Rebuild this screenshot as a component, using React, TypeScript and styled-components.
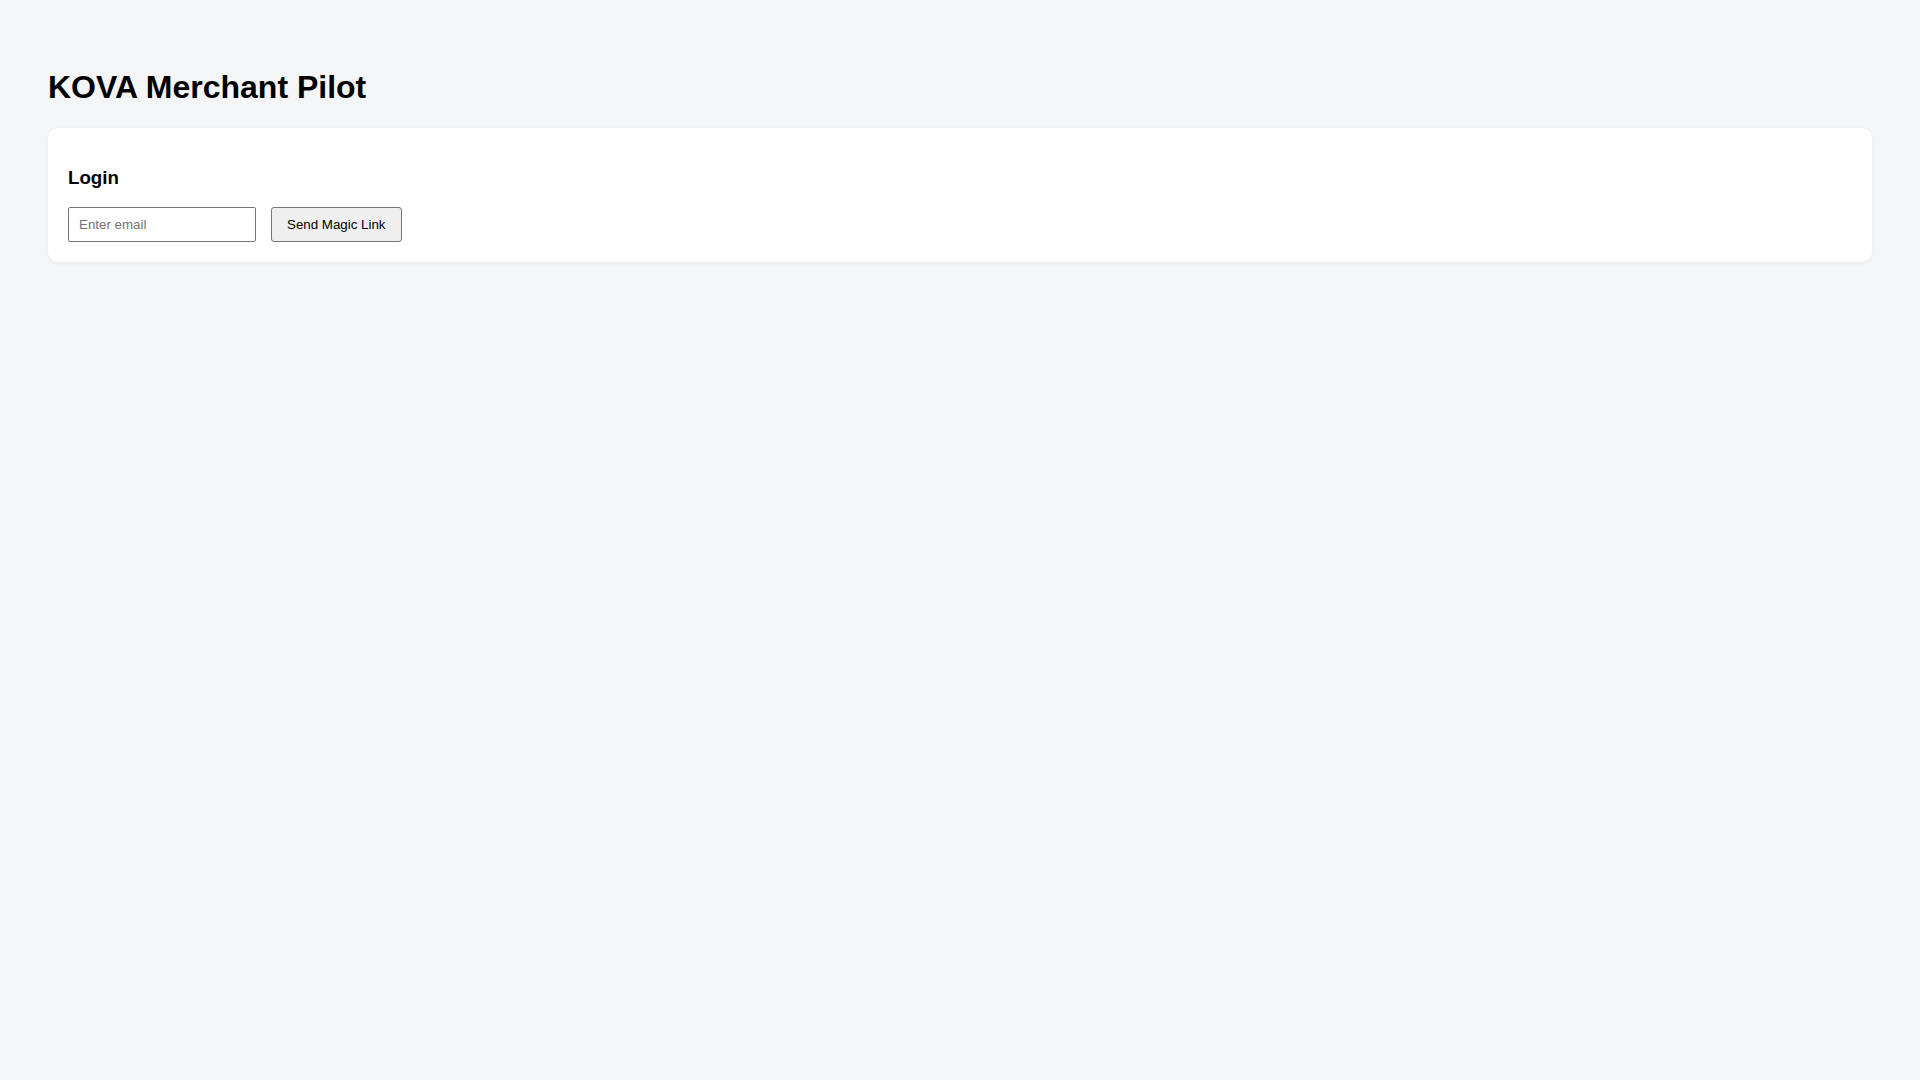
import React, { useState } from "react";
import styled, { createGlobalStyle } from "styled-components";

const GlobalStyle = createGlobalStyle`
  html, body {
    margin: 0;
    padding: 0;
    background: #f4f5f7;
    font-family: "Liberation Sans", Arial, sans-serif;
    color: #000;
  }
`;

const Page = styled.div`
  min-height: 1080px;
  box-sizing: border-box;
  padding: 48px;
`;

const Title = styled.h1`
  font-size: 32px;
  font-weight: bold;
  margin: 21.44px 0;
`;

const Card = styled.section`
  background: #fff;
  border-radius: 10px;
  box-shadow: 0 1px 4px rgba(0, 0, 0, 0.05);
  padding: 20px;
`;

const CardTitle = styled.h3`
  font-size: 18.72px;
  font-weight: bold;
  margin: 18.72px 0;
`;

const Row = styled.form`
  display: flex;
  align-items: center;
  gap: 15px;
`;

const EmailInput = styled.input`
  box-sizing: border-box;
  width: 188px;
  height: 35px;
  padding: 0 10px;
  font-family: "Liberation Sans", Arial, sans-serif;
  font-size: 13.33px;
  border: 1px solid #767676;
  border-radius: 2px;
  background: #fff;

  &::placeholder {
    color: #757575;
  }
`;

const Button = styled.button`
  box-sizing: border-box;
  height: 35px;
  padding: 0 15px;
  white-space: nowrap;
  font-family: "Liberation Sans", Arial, sans-serif;
  font-size: 13.33px;
  color: #000;
  background: #efefef;
  border: 1px solid #767676;
  border-radius: 3px;
  cursor: pointer;
`;

const App = () => {
  const [email, setEmail] = useState("");

  return (
    <>
      <GlobalStyle />
      <Page>
        <Title>KOVA Merchant Pilot</Title>
        <Card>
          <CardTitle>Login</CardTitle>
          <Row onSubmit={(e) => e.preventDefault()}>
            <EmailInput
              type="email"
              placeholder="Enter email"
              value={email}
              onChange={(e) => setEmail(e.target.value)}
            />
            <Button type="submit">Send Magic Link</Button>
          </Row>
        </Card>
      </Page>
    </>
  );
};

export default App;
